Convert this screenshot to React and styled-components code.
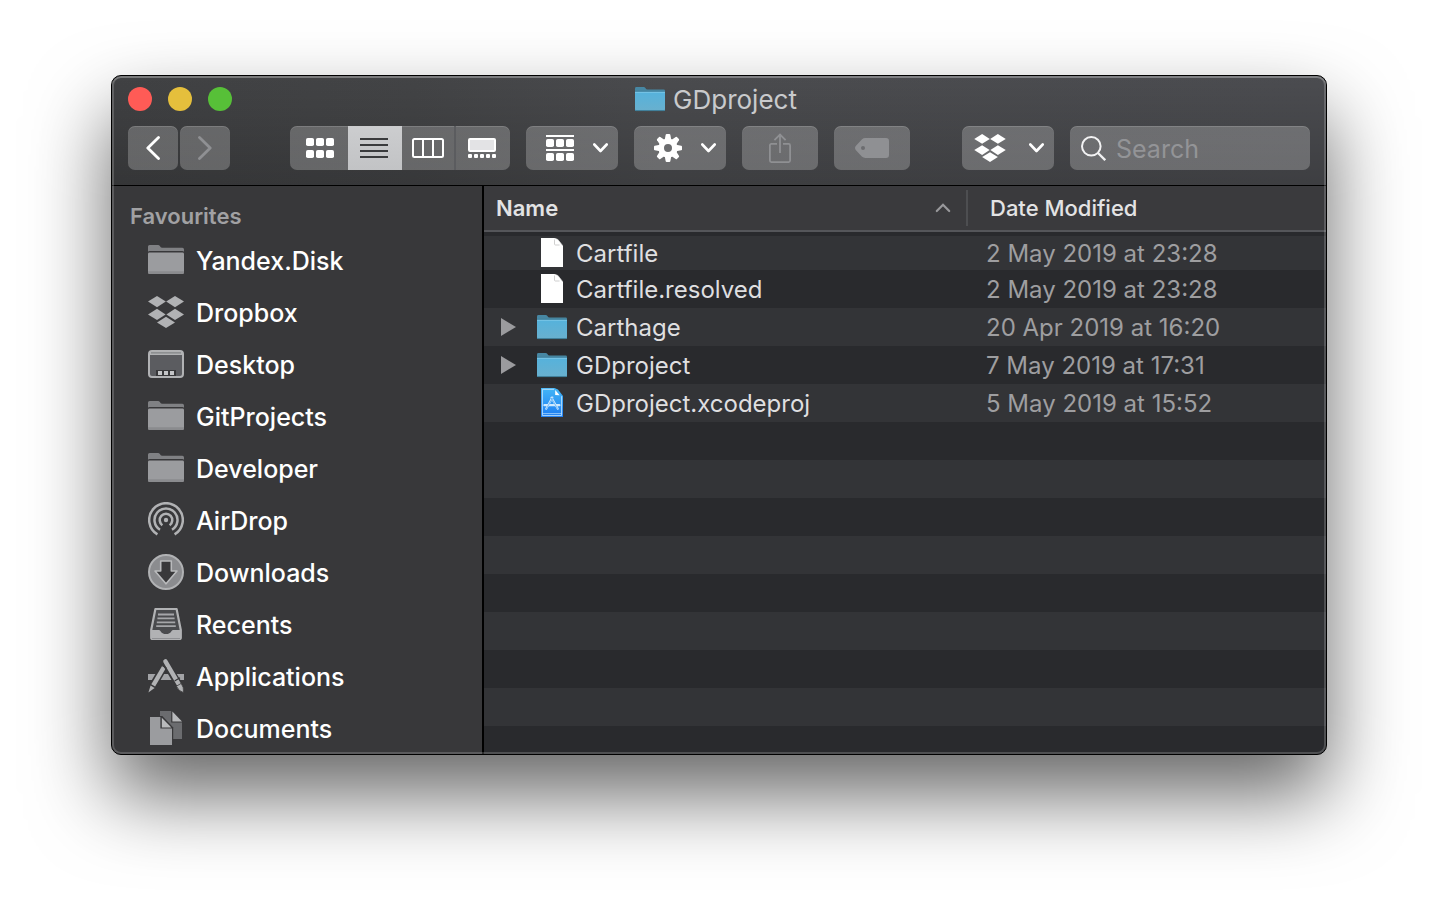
import React from "react";
import styled, { createGlobalStyle, css } from "styled-components";

const GlobalStyle = createGlobalStyle`
  *, *::before, *::after { box-sizing: border-box; }
  body {
    margin: 0;
    background: #fff;
    font-family: Inter, "Liberation Sans", sans-serif;
    -webkit-font-smoothing: antialiased;
  }
  button, input, table { font: inherit; color: inherit; }
  svg { display: block; flex: none; }
`;

const Desktop = styled.div`
  padding: 75px 111px 147px;
  overflow: hidden;
`;

const Window = styled.main`
  position: relative;
  border: 1px solid #000;
  border-radius: 10px;
  overflow: hidden;
  background: #38383a;
  box-shadow: 0 40px 80px rgba(0, 0, 0, 0.6);

  &::after {
    content: "";
    position: absolute;
    inset: 0;
    border-radius: 9px;
    pointer-events: none;
    box-shadow: inset 0 0 0 2px rgba(255, 255, 255, 0.18),
      inset 0 2px 0 rgba(255, 255, 255, 0.15);
  }
`;

const TitleBar = styled.header`
  padding: 8px 16px 15px;
  border-bottom: 1px solid #000;
  background: linear-gradient(rgba(0, 0, 0, 0), rgba(0, 0, 0, 0.18)),
    linear-gradient(90deg, #404143, #434446 25%, #4a4b4e 45%, #4b4c50);
`;

const TitleRow = styled.div`
  display: grid;
  grid-template-columns: 1fr auto 1fr;
  align-items: center;
  height: 28px;
  margin-bottom: 14px;
`;

const Lights = styled.div`
  display: flex;
  gap: 16px;
`;

const Light = styled.button`
  width: 24px;
  height: 24px;
  padding: 0;
  border: 0;
  border-radius: 50%;
  background: ${(p) => p.$color};
`;

const Title = styled.h1`
  display: flex;
  align-items: center;
  gap: 8px;
  margin: 0;
  padding-right: 6px;
  font-size: 26px;
  line-height: 28px;
  font-weight: 400;
  color: #c9cacc;
`;

const Label = styled.span`
  padding-top: 2px;
`;

const Tools = styled.div`
  display: flex;
`;

const surface = css`
  height: 44px;
  border: 0;
  border-radius: 7px;
  background: linear-gradient(rgba(255, 255, 255, 0.22), rgba(255, 255, 255, 0.23));
  box-shadow: inset 0 1px 0 rgba(255, 255, 255, 0.14);
`;

const ToolButton = styled.button`
  ${surface}
  display: flex;
  align-items: center;
  justify-content: center;
  width: ${(p) => p.$width}px;
  margin-left: ${(p) => p.$gap || 0}px;
  padding: 0;
  color: ${(p) => (p.disabled ? "#8f9093" : "#fff")};
`;

const MenuButton = styled(ToolButton)`
  justify-content: space-between;
  width: 92px;
  padding: 0 10px 0 ${(p) => p.$inset}px;
`;

const Segments = styled.div`
  ${surface}
  display: flex;
  margin-left: 60px;
  overflow: hidden;
`;

const Segment = styled.button`
  display: flex;
  align-items: center;
  justify-content: center;
  width: 54px;
  padding: 0 2px 0 0;
  border: 0;
  background: ${(p) => (p.$active ? "linear-gradient(#cccdcf, #c2c3c5)" : "transparent")};
  color: ${(p) => (p.$active ? "#3a3b3d" : "#fff")};

  &:first-child {
    width: 58px;
    padding: 0 0 0 2px;
  }
  &:nth-child(3) {
    padding: 0;
    border-right: 2px solid #5b5c5f;
  }
`;

const SearchField = styled.label`
  ${surface}
  flex: 1;
  display: flex;
  align-items: center;
  gap: 10px;
  min-width: 0;
  margin-left: 16px;
  padding: 0 10px 0 11px;
  color: #f2f2f3;
`;

const SearchInput = styled.input`
  flex: 1;
  min-width: 0;
  padding: 2px 0 0;
  border: 0;
  outline: 0;
  background: transparent;
  font-size: 25px;
  line-height: 32px;
  &::placeholder { color: #939497; opacity: 1; }
`;

const Body = styled.div`
  display: flex;
`;

const Sidebar = styled.nav`
  flex: none;
  width: 372px;
  border-right: 2px solid #000;
  background: #38383a;
`;

const SidebarHeading = styled.h2`
  margin: 0;
  padding: 16px 18px 4px;
  font-size: 22px;
  line-height: 28px;
  font-weight: 600;
  color: #a1a1a3;
`;

const Places = styled.ul`
  margin: 0;
  padding: 0;
  list-style: none;
`;

const Place = styled.a`
  display: flex;
  align-items: center;
  gap: 12px;
  height: 52px;
  padding-left: 36px;
  font-size: 25px;
  line-height: 32px;
  font-weight: 500;
  color: #fff;
  text-decoration: none;
`;

const Pane = styled.section`
  flex: 1;
  min-width: 0;
  display: flex;
  flex-direction: column;
  background: #292a2d;
`;

const FileTable = styled.table`
  width: 100%;
  table-layout: fixed;
  border-collapse: separate;
  border-spacing: 0;
`;

const NameColumn = styled.col``;
const DateColumn = styled.col`
  width: 358px;
`;

const HeadCell = styled.th`
  height: 50px;
  padding: 0;
  text-align: left;
  font-size: 22px;
  line-height: 36px;
  font-weight: ${(p) => (p.$sorted ? 600 : 500)};
  color: #e3e3e4;
  vertical-align: top;
  border-bottom: 4px solid #292a2d;
  background: #3a3a3d;
`;

const HeadLabel = styled.div`
  display: flex;
  align-items: center;
  height: 46px;
  padding: 4px 0;
  border-bottom: 2px solid #55565a;
`;

const HeadInner = styled.div`
  flex: 1;
  display: flex;
  align-items: center;
  justify-content: space-between;
  height: 36px;
  padding: 0 15px 0 ${(p) => p.$inset}px;
  border-right: ${(p) => (p.$divided ? "2px solid #4d4e51" : "0")};
`;

const Row = styled.tr`
  height: 38px;
  background: #292a2d;
  &:first-child { height: 34px; }
  &:nth-child(odd) { background: #333437; }
`;

const Cell = styled.td`
  padding: 2px 0;
  font-size: 24px;
  line-height: 34px;
  font-weight: 400;
  vertical-align: top;

  ${Row}:first-child & { padding: 0; }
`;

const FileName = styled.div`
  display: flex;
  align-items: center;
  height: 34px;
  padding-left: 16px;
  line-height: 32px;
  color: #dfdfe0;
`;

const FileDate = styled.div`
  height: 34px;
  padding: 2px 0 0 18px;
  line-height: 32px;
  color: #9e9ea0;
`;

const Disclosure = styled.button`
  display: flex;
  align-items: center;
  width: 36px;
  height: 24px;
  padding: 0;
  border: 0;
  background: transparent;
  color: #9b9b9e;
`;

const NoDisclosure = styled.span`
  width: 36px;
`;

const FileIcon = styled.span`
  display: flex;
  justify-content: center;
  width: 32px;
  margin-right: 8px;
`;

const EmptyRows = styled.div`
  flex: 1;
  background: repeating-linear-gradient(#292a2d 0 38px, #333437 38px 76px);
`;

/* ---------- icons ---------- */

const Chevron = () => (
  <svg width="15" height="10" viewBox="0 0 15 10" fill="none" stroke="currentColor" strokeWidth="2.6" strokeLinecap="round" strokeLinejoin="round">
    <path d="M1.3 1.5 7.5 8 13.7 1.5" />
  </svg>
);

const Angle = ({ flip }) => (
  <svg width="14" height="24" viewBox="0 0 14 24" fill="none" stroke="currentColor" strokeWidth="2.8" strokeLinecap="round" strokeLinejoin="round">
    <path d={flip ? "M1.5 1.5 12.2 12 1.5 22.5" : "M12.5 1.5 1.8 12 12.5 22.5"} />
  </svg>
);

const GridIcon = () => (
  <svg width="28" height="20" viewBox="0 0 28 20" fill="currentColor">
    {[0, 12].map((y) => [0, 10, 20].map((x) => <rect key={x + "-" + y} x={x} y={y} width="8" height="8" rx="1.8" />))}
  </svg>
);

const ListIcon = () => (
  <svg width="28" height="20" viewBox="0 0 28 20" fill="currentColor">
    {[0, 6, 12, 18].map((y) => <rect key={y} y={y} width="28" height="2" />)}
  </svg>
);

const ColumnsIcon = () => (
  <svg width="32" height="20" viewBox="0 0 32 20" fill="none" stroke="currentColor" strokeWidth="2">
    <rect x="1" y="1" width="30" height="18" rx="1.5" />
    <path d="M11 1V19M21 1V19" />
  </svg>
);

const GalleryIcon = () => (
  <svg width="28" height="20" viewBox="0 0 28 20" fill="currentColor">
    <rect x="1" y="1" width="26" height="12" rx="1" fill="#e3e3e5" stroke="currentColor" strokeWidth="2" />
    {[0, 6, 12, 18, 24].map((x) => <rect key={x} x={x} y="16" width="4" height="4" rx="1" />)}
  </svg>
);

const ArrangeIcon = () => (
  <svg width="28" height="26" viewBox="0 0 28 26" fill="currentColor">
    <rect width="28" height="2" />
    <rect y="14" width="28" height="2" />
    {[4, 18].map((y) => [0, 10, 20].map((x) => <rect key={x + "-" + y} x={x} y={y} width="8" height="8" rx="1.8" />))}
  </svg>
);

const GearIcon = () => (
  <svg width="28" height="28" viewBox="-14 -14 28 28" fill="currentColor">
    {[0, 45, 90, 135, 180, 225, 270, 315].map((a) => (
      <path key={a} d="M-3.3 -8 L-2.3 -13.2 Q-2.1 -14 -1.4 -14 H1.4 Q2.1 -14 2.3 -13.2 L3.3 -8Z" transform={`rotate(${a})`} />
    ))}
    <circle r="6.8" fill="none" stroke="currentColor" strokeWidth="5.6" />
  </svg>
);

const ShareIcon = () => (
  <svg width="22" height="30" viewBox="0 0 22 30" fill="none" stroke="currentColor" strokeWidth="1.8">
    <path d="M8 10.9H2.4Q.9 10.9.9 12.4V27.6Q.9 29.1 2.4 29.1H19.6Q21.1 29.1 21.1 27.6V12.4Q21.1 10.9 19.6 10.9H14" />
    <path d="M11 20V1.6M5.4 7.2 11 1.5 16.6 7.2" />
  </svg>
);

const TagIcon = () => (
  <svg width="34" height="20" viewBox="0 0 34 20" fill="currentColor">
    <path fillRule="evenodd" d="M10.5 0H31Q34 0 34 3V17Q34 20 31 20H10.5Q8.3 20 6.8 18.6L1.2 12.6Q-1.2 10 1.2 7.4L6.8 1.4Q8.3 0 10.5 0ZM8 8A2 2 0 1 0 8 12A2 2 0 1 0 8 8Z" />
  </svg>
);

const DropboxShape = () => (
  <>
    <path d="M9 0 17.8 5.6 9 11.2 0 5.6Z" />
    <path d="M27 0 36 5.6 27 11.2 18.2 5.6Z" />
    <path d="M9 12.8 17.6 18.4 9 24 0 18.4Z" />
    <path d="M27 12.8 36 18.4 27 24 18.4 18.4Z" />
    <path d="M18 20.8 27 26.4 18 32 9 26.4Z" />
  </>
);

const DropboxTool = () => (
  <svg width="32" height="28" viewBox="0 0 36 32" fill="currentColor"><DropboxShape /></svg>
);

const MagnifierIcon = () => (
  <svg width="25" height="25" viewBox="0 0 25 25" fill="none" stroke="currentColor" strokeWidth="2">
    <circle cx="10.3" cy="10.3" r="9.3" />
    <path d="M17 17 24.2 24.2" strokeWidth="2.3" />
  </svg>
);

const SortIcon = () => (
  <svg width="16" height="10" viewBox="0 0 16 10" fill="none" stroke="#98989b" strokeWidth="2.2" strokeLinecap="round">
    <path d="M1.8 8 8 1.8 14.2 8" />
  </svg>
);

const TriangleIcon = () => (
  <svg width="16" height="18" viewBox="0 0 16 18" fill="currentColor"><path d="M1 0 16 9 1 18Z" /></svg>
);

const BlueFolder = () => (
  <svg width="30" height="26" viewBox="0 -1 30 26">
    <defs>
      <linearGradient id="folderFront" x1="0" y1="0" x2="0" y2="1">
        <stop offset="0" stopColor="#55b2dc" />
        <stop offset="1" stopColor="#69b0ce" />
      </linearGradient>
    </defs>
    <path d="M0 24V1.4Q0 0 1.4 0H8.6Q9.8 0 10.4 1 11.2 2.6 12.6 2.6H28.8Q30 2.6 30 4V24Z" fill="#4787a3" />
    <path d="M0 4.6H30V23Q30 24 29 24H1Q0 24 0 23Z" fill="url(#folderFront)" />
    <path d="M0 4.4H30" stroke="#3c7893" strokeWidth=".8" />
    <path d="M0 5.3H30" stroke="#84cbe9" strokeWidth=".8" />
    <path d="M0 22.8Q0 23.6 1 23.6H29Q30 23.6 30 22.8" stroke="#3d7b95" strokeWidth="1" fill="none" />
  </svg>
);

const PageIcon = () => (
  <svg width="22" height="30" viewBox="0 0 22 30">
    <path d="M0 0H13.5L17 1.6 22 8V29H0Z" fill="#fff" />
    <path d="M13.5 1.5V6Q13.5 7 14.5 7H18.6" fill="none" stroke="#c9c9c9" strokeWidth=".9" />
    <path d="M13.5 0 17 1.6 22 8" fill="none" stroke="#d8d8d8" strokeWidth=".6" />
  </svg>
);

const XcodeIcon = () => (
  <svg width="22" height="30" viewBox="0 0 22 30">
    <defs>
      <linearGradient id="xcodePage" x1="0" y1="0" x2="0" y2="1">
        <stop offset="0" stopColor="#43b6f6" />
        <stop offset="1" stopColor="#1c7cf2" />
      </linearGradient>
    </defs>
    <path d="M0 0H13.5L17 1.6 22 8V29H0Z" fill="url(#xcodePage)" />
    <path d="M13 1.3H1.4V27.6H20.6V8.2" fill="none" stroke="#bfe3fd" strokeWidth=".9" />
    <path d="M1.4 25.6H20.6" stroke="#bfe3fd" strokeWidth=".7" />
    <path d="M14.2 2 18.6 7.2 14.2 7Z" fill="#fff" />
    <g fill="none" stroke="#cfe9fd" strokeLinecap="round">
      <path d="M11.4 9.5 5.2 20.8M10.4 9.5 16.8 20.8" strokeWidth="2" />
      <path d="M3.4 17.2H18.4" strokeWidth="2.2" />
      <path d="M11.4 10.2 5.6 20.4M10.4 10.2 16.4 20.4" strokeWidth=".6" stroke="#2f97f4" />
    </g>
  </svg>
);

const PlaceIcon = ({ children }) => (
  <svg width="36" height="36" viewBox="0 0 36 36" fill="#b1b2b4">{children}</svg>
);

const FolderPlace = () => (
  <PlaceIcon>
    <path d="M0 9.8V4.6Q0 3 1.6 3H10Q11.3 3 12 4.2 12.8 5.8 14.4 5.8H34.4Q36 5.8 36 7.4V9.8Q35.4 9 34.2 9H1.8Q.6 9 0 9.8Z" fill="#808184" />
    <path d="M1.4 10.6H34.6Q36 10.6 36 12V30.6Q36 32 34.6 32H1.4Q0 32 0 30.6V12Q0 10.6 1.4 10.6Z" fill="#9b9c9f" />
    <path d="M0 29.2H36V30.6Q36 32 34.6 32H1.4Q0 32 0 30.6Z" fill="#8a8b8e" />
  </PlaceIcon>
);

const DropboxPlace = () => (
  <PlaceIcon><g transform="translate(0 2)"><DropboxShape /></g></PlaceIcon>
);

const DesktopPlace = () => (
  <PlaceIcon>
    <rect x="1" y="5" width="34" height="26" rx="3" fill="#5b5c60" stroke="#b1b2b4" strokeWidth="2" />
    <path d="M2 6H34V9H2Z" fill="#b1b2b4" />
    <path d="M3 6.9H33" stroke="#77787b" strokeWidth="1" />
    <rect x="8" y="24" width="20" height="6" fill="#38383a" />
    <path d="M10 25H14V29H10ZM16 25H20V29H16ZM22 25H26V29H22Z" fill="#c4c5c7" />
  </PlaceIcon>
);

const AirDropPlace = () => (
  <PlaceIcon>
    <g fill="none" stroke="#b1b2b4" strokeWidth="2.5">
      <path d="M9.4 32.4A16.8 16.8 0 1 1 26.6 32.4" />
      <path d="M12 27.8A11.5 11.5 0 1 1 24 27.8" />
      <path d="M14.4 23.2A6.3 6.3 0 1 1 21.6 23.2" />
    </g>
    <circle cx="18" cy="18" r="2.2" />
  </PlaceIcon>
);

const DownloadsPlace = () => (
  <PlaceIcon>
    <circle cx="18" cy="18" r="17" fill="#8b8c8f" stroke="#b1b2b4" strokeWidth="2" />
    <path d="M12.7 7H23.3V17H29L18 29.8 7 17H12.7Z" fill="#38383a" stroke="#b9babc" strokeWidth="1.6" strokeLinejoin="round" />
  </PlaceIcon>
);

const RecentsPlace = () => (
  <PlaceIcon>
    <path d="M7.4 3H28.6L32.8 24V31.5Q32.8 33 31.3 33H4.7Q3.2 33 3.2 31.5V24Z" fill="#4a4b4e" stroke="#b1b2b4" strokeWidth="2.2" strokeLinejoin="round" />
    <path d="M3 24H10.5Q12 24 12.6 25.2 14 28 18 28T23.4 25.2Q24 24 25.5 24H33V33H3Z" fill="#b1b2b4" />
    <path d="M4 32H32V33H4Z" fill="#8f9093" />
    <path d="M10 8.5H26M9.4 12.4H26.6M8.8 16.3H27.2M8.2 20.2H27.8" stroke="#a5a6a9" strokeWidth="1.8" />
  </PlaceIcon>
);

const ApplicationsPlace = () => (
  <PlaceIcon>
    <path d="M0 16H36V22H0Z" fill="#a2a3a6" />
    <g strokeLinecap="round" fill="none">
      <path d="M19 3.5 4.8 28" stroke="#38383a" strokeWidth="7.5" strokeLinecap="butt" />
      <path d="M16.6 8 5.2 27.4" stroke="#b1b2b4" strokeWidth="4.4" strokeLinecap="butt" />
      <path d="M17 3.5 31.5 28" stroke="#38383a" strokeWidth="7.5" />
      <path d="M17.4 3.4 31 26.6" stroke="#b1b2b4" strokeWidth="4.4" />
      <path d="M13.6 7.2 18 9.8" stroke="#38383a" strokeWidth="1.2" />
      <path d="M27 22.8 31.6 20" stroke="#38383a" strokeWidth="1.2" />
    </g>
    <path d="M2.6 27.6 6.6 30 .4 34.4Z" />
    <path d="M28.4 28.2 33.2 25.4Q36 29 35.6 34.6 30.6 33.4 28.4 28.2Z" stroke="#38383a" strokeWidth=".8" />
  </PlaceIcon>
);

const DocumentsPlace = () => (
  <PlaceIcon>
    <path d="M12 1H23.2V12.4H34V29H12Z" fill="#6b6c6f" />
    <path d="M24.4 1.4 34 11.4H24.4Z" fill="#b9babc" />
    <path d="M1 6H14.4L25.2 17.6V36H1Z" fill="#38383a" />
    <path d="M2 7H12.4V18.6H24V35H2Z" fill="#9b9c9f" />
    <path d="M13.8 7.8 23.4 17.4H13.8Z" fill="#b9babc" />
  </PlaceIcon>
);

/* ---------- data ---------- */

const places = [
  ["Yandex.Disk", FolderPlace],
  ["Dropbox", DropboxPlace],
  ["Desktop", DesktopPlace],
  ["GitProjects", FolderPlace],
  ["Developer", FolderPlace],
  ["AirDrop", AirDropPlace],
  ["Downloads", DownloadsPlace],
  ["Recents", RecentsPlace],
  ["Applications", ApplicationsPlace],
  ["Documents", DocumentsPlace],
];

const files = [
  { name: "Cartfile", date: "2 May 2019 at 23:28", Icon: PageIcon },
  { name: "Cartfile.resolved", date: "2 May 2019 at 23:28", Icon: PageIcon },
  { name: "Carthage", date: "20 Apr 2019 at 16:20", Icon: BlueFolder, folder: true },
  { name: "GDproject", date: "7 May 2019 at 17:31", Icon: BlueFolder, folder: true },
  { name: "GDproject.xcodeproj", date: "5 May 2019 at 15:52", Icon: XcodeIcon },
];

export default function App() {
  return (
    <Desktop>
      <GlobalStyle />
      <Window>
        <TitleBar>
          <TitleRow>
            <Lights>
              <Light $color="#ff5b56" aria-label="Close" />
              <Light $color="#e5bf3c" aria-label="Minimise" />
              <Light $color="#57c038" aria-label="Zoom" />
            </Lights>
            <Title><BlueFolder /><Label>GDproject</Label></Title>
          </TitleRow>
          <Tools>
            <ToolButton $width={50} aria-label="Back"><Angle /></ToolButton>
            <ToolButton $width={50} $gap={2} disabled aria-label="Forward"><Angle flip /></ToolButton>
            <Segments role="group" aria-label="View">
              <Segment aria-label="Icons"><GridIcon /></Segment>
              <Segment $active aria-pressed="true" aria-label="List"><ListIcon /></Segment>
              <Segment aria-label="Columns"><ColumnsIcon /></Segment>
              <Segment aria-label="Gallery"><GalleryIcon /></Segment>
            </Segments>
            <MenuButton $gap={16} $inset={20} aria-haspopup="menu" aria-label="Group"><ArrangeIcon /><Chevron /></MenuButton>
            <MenuButton $gap={16} $inset={20} aria-haspopup="menu" aria-label="Action"><GearIcon /><Chevron /></MenuButton>
            <ToolButton $width={76} $gap={16} disabled aria-label="Share"><ShareIcon /></ToolButton>
            <ToolButton $width={76} $gap={16} disabled aria-label="Edit Tags"><TagIcon /></ToolButton>
            <MenuButton $gap={52} $inset={12} aria-haspopup="menu" aria-label="Dropbox"><DropboxTool /><Chevron /></MenuButton>
            <SearchField>
              <MagnifierIcon />
              <SearchInput type="search" placeholder="Search" aria-label="Search" />
            </SearchField>
          </Tools>
        </TitleBar>
        <Body>
          <Sidebar>
            <SidebarHeading>Favourites</SidebarHeading>
            <Places>
              {places.map(([name, Icon]) => (
                <li key={name}><Place href="#"><Icon /><Label>{name}</Label></Place></li>
              ))}
            </Places>
          </Sidebar>
          <Pane>
            <FileTable>
              <colgroup><NameColumn /><DateColumn /></colgroup>
              <thead>
                <tr>
                  <HeadCell $sorted scope="col" aria-sort="ascending">
                    <HeadLabel><HeadInner $inset={12} $divided>Name<SortIcon /></HeadInner></HeadLabel>
                  </HeadCell>
                  <HeadCell scope="col">
                    <HeadLabel><HeadInner $inset={22}>Date Modified</HeadInner></HeadLabel>
                  </HeadCell>
                </tr>
              </thead>
              <tbody>
                {files.map(({ name, date, Icon, folder }) => (
                  <Row key={name}>
                    <Cell>
                      <FileName>
                        {folder ? <Disclosure aria-label={"Expand " + name}><TriangleIcon /></Disclosure> : <NoDisclosure />}
                        <FileIcon><Icon /></FileIcon>
                        <Label>{name}</Label>
                      </FileName>
                    </Cell>
                    <Cell><FileDate>{date}</FileDate></Cell>
                  </Row>
                ))}
              </tbody>
            </FileTable>
            <EmptyRows />
          </Pane>
        </Body>
      </Window>
    </Desktop>
  );
}
